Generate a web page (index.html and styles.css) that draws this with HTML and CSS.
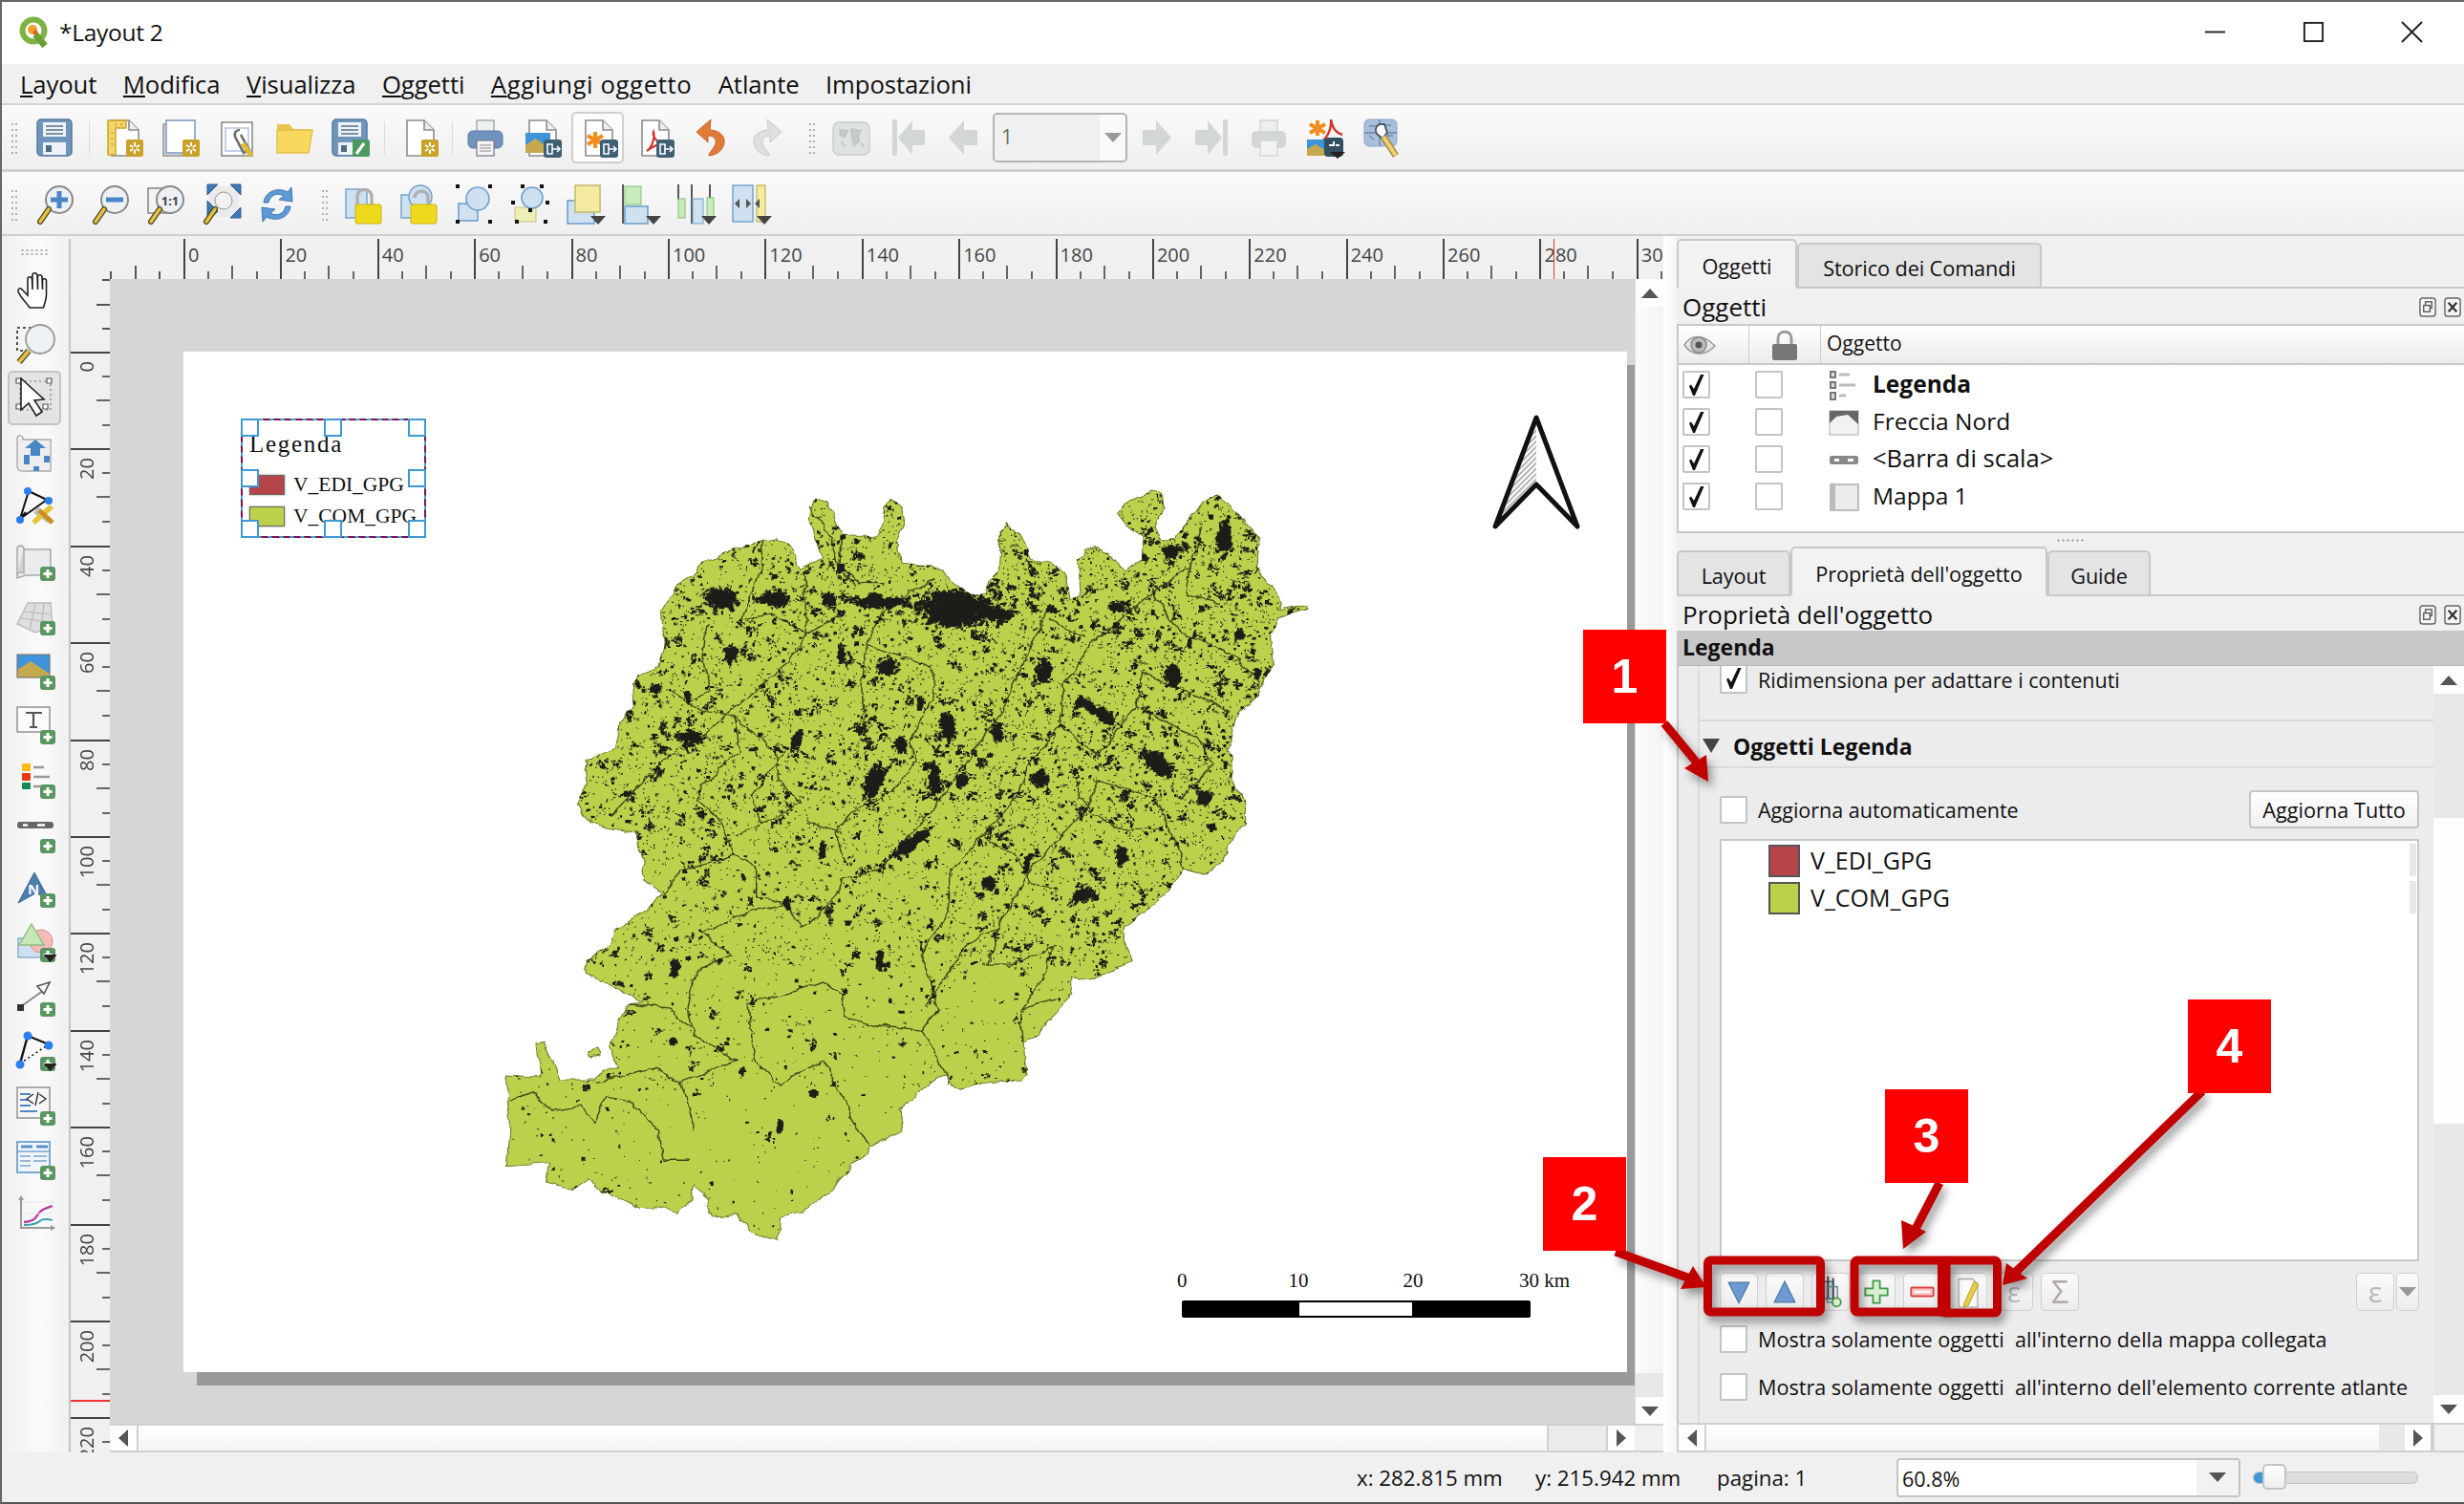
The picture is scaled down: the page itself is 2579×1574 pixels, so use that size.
FILE: index.html
```html
<!DOCTYPE html>
<html lang="it">
<head>
<meta charset="utf-8">
<title>*Layout 2</title>
<link rel="stylesheet" href="styles.css">
</head>
<body>
<svg class="sprite" aria-hidden="true">
<defs>
<pattern id="hatch" width="4" height="4" patternUnits="userSpaceOnUse" patternTransform="rotate(45)"><rect width="4" height="4" fill="#fff"/><rect width="2" height="4" fill="#b4b4b4"/></pattern>
<path id="tick" d="M5 14l2-1.500 3 4.500 7-15h3.500L11 24H9z" fill="#111"/>
<g id="page"><path d="M9 4h18l10 10v27H9z" fill="#fff" stroke="#8c8c8c" stroke-width="1.6"/><path d="M27 4v10h10" fill="#eee" stroke="#8c8c8c" stroke-width="1.6"/></g>
<g id="gear"><rect x="24" y="24" width="18" height="18" rx="2" fill="#c9a227"/><path d="M33 27v12M28 30l10 6M38 30l-10 6" stroke="#fff" stroke-width="2"/><circle cx="33" cy="33" r="2" fill="#c9a227"/></g>
<g id="xport"><rect x="24" y="24" width="19" height="19" rx="3" fill="#3f5f73"/><path d="M28 29h5v10h-5z" fill="none" stroke="#fff" stroke-width="1.6"/><path d="M33 34h7M38 31l3 3-3 3" fill="none" stroke="#fff" stroke-width="1.6"/></g>
<g id="plusb"><rect x="27" y="27" width="16" height="15" rx="3" fill="#5b9660"/><path d="M35 30v9M30.5 34.5h9" stroke="#fff" stroke-width="3"/></g>
<g id="handle"><path d="M15 27L6 40" stroke="#4a4a30" stroke-width="6" stroke-linecap="round"/><path d="M15 27L6 40" stroke="#e8c23a" stroke-width="3.4" stroke-linecap="round"/></g>
<g id="lens"><circle cx="26" cy="17" r="14" fill="#eef1f3" stroke="#8a8a8a" stroke-width="2"/><use href="#handle"/></g>
<g id="floppy"><rect x="4" y="3" width="36" height="38" rx="4" fill="#7095bc" stroke="#557a9f" stroke-width="1.5"/><rect x="10" y="6" width="24" height="15" fill="#eef2f6"/><path d="M13 10h18M13 14h18M13 18h18" stroke="#56718c" stroke-width="1.5"/><rect x="10" y="27" width="24" height="13" fill="#eef2f6"/><rect x="13" y="30" width="6" height="7" fill="#4d6a86"/></g>
<g id="i-newlayout"><use href="#page"/><path d="M5 4h19v8H13v28H5z" fill="#f3d56a" stroke="#c9a227" stroke-width="1.4"/><path d="M8 17h3M8 23h3M8 29h3M13 7v3M19 7v3" stroke="#c9a227" stroke-width="1.2"/><use href="#gear"/></g>
<g id="i-dup"><rect x="4" y="8" width="26" height="33" fill="#dcdcdc" stroke="#8c8c8c" stroke-width="1.4"/><rect x="7" y="4" width="30" height="34" fill="#fff" stroke="#7f9fc4" stroke-width="1.6"/><use href="#gear"/></g>
<g id="i-mgr"><rect x="6" y="6" width="32" height="35" fill="#fff" stroke="#8c8c8c" stroke-width="1.6"/><rect x="10" y="12" width="24" height="24" fill="#fff" stroke="#b6c8e4" stroke-width="1.6"/><path d="M25 14c-4 0-6 3-5 7l9 17 6-3-9-16" fill="none" stroke="#6d6d6d" stroke-width="2.6"/><path d="M28 28l9 13" stroke="#e0bc35" stroke-width="5"/></g>
<g id="i-folder"><path d="M5 8h13l4 5h18v4H5z" fill="#e9c54d"/><path d="M5 14h37l-4 24H5z" fill="#f8d95e" stroke="#e3bf4a" stroke-width="1.4"/></g>
<g id="i-saveas"><use href="#floppy"/><rect x="25" y="24" width="18" height="18" rx="2" fill="#4c9a5f"/><path d="M29 39l8-11" stroke="#fff" stroke-width="3"/></g>
<g id="i-new"><use href="#page"/><use href="#gear"/></g>
<g id="i-print"><rect x="13" y="4" width="18" height="14" fill="#f0f0f0" stroke="#9aa" stroke-width="1.4"/><rect x="4" y="15" width="36" height="18" rx="5" fill="#6f93bc" stroke="#5a7ea5"/><rect x="13" y="25" width="18" height="16" fill="#f6f6f6" stroke="#778" stroke-width="1.2"/><path d="M16 30h12M16 33h12M16 36h12" stroke="#888" stroke-width="1.2"/></g>
<g id="i-img"><use href="#page"/><rect x="5" y="17" width="26" height="21" fill="#3f93d8"/><path d="M5 38V30l10-7 16 10v5z" fill="#c6a94f"/><use href="#xport"/></g>
<g id="i-svg"><use href="#page"/><path d="M19 16v17M11 20l16 9M27 20l-16 9" stroke="#f28c1c" stroke-width="4"/><use href="#xport"/></g>
<g id="i-pdf"><use href="#page"/><path d="M14 36c5-3 9-14 7-20-1 3 2 12 12 13-7-1-14 3-19 7z" fill="none" stroke="#d5352b" stroke-width="2.2"/><use href="#xport"/></g>
<g id="i-undo"><path d="M22 3L7 16l12 11v-7c7 0 9 4 8 8-1 5-7 9-7 13 11-1 17-9 16-17-1-6-8-10-15-10z" fill="#e07a36" stroke="#c8682c"/></g>
<g id="i-redo"><path d="M22 3l15 13-12 11v-7c-7 0-9 4-8 8 1 5 7 9 7 13-11-1-17-9-16-17 1-6 8-10 15-10z" fill="#dde0dd" stroke="#c8cbc8"/></g>
<g id="i-atlas"><rect x="3" y="6" width="38" height="34" rx="6" fill="#dfe2e2" stroke="#c8cccc" stroke-width="1.4"/><path d="M10 14l8 1-3 6-4-1zM22 13l10 2-3 5 1 6-5 4-2-8zM12 26l3 6M33 28l2 4" stroke="#c2c6c6" stroke-width="2" fill="#c8cccc"/></g>
<g id="i-first"><rect x="6" y="3" width="5" height="38" rx="2" fill="#d3d6d6"/><path d="M12 22L27 4v10h13v16H27v10z" fill="#d3d6d6"/></g>
<g id="i-prev"><path d="M6 22L22 4v10h14v16H22v10z" fill="#d3d6d6"/></g>
<g id="i-next"><path d="M38 22L22 4v10H8v16h14v10z" fill="#d3d6d6"/></g>
<g id="i-last"><rect x="33" y="3" width="5" height="38" rx="2" fill="#d3d6d6"/><path d="M32 22L17 4v10H4v16h13v10z" fill="#d3d6d6"/></g>
<g id="i-dprint"><rect x="13" y="4" width="18" height="14" fill="#eee" stroke="#d0d3d3" stroke-width="1.4"/><rect x="4" y="15" width="36" height="18" rx="5" fill="#d3d6d6"/><rect x="13" y="25" width="18" height="16" fill="#f2f2f2" stroke="#d0d3d3" stroke-width="1.2"/></g>
<g id="i-batch"><path d="M14 4v16M6 8l16 9M22 8l-16 9" stroke="#f28c1c" stroke-width="4"/><path d="M28 3c1 10-4 20-11 24m11-24c1 8 5 14 12 16" stroke="#d5352b" stroke-width="2.4" fill="none"/><rect x="3" y="24" width="22" height="17" fill="#3f93d8"/><path d="M3 41v-7l9-5 13 8v4z" fill="#c6a94f"/><rect x="21" y="22" width="20" height="20" rx="4" fill="#324e61"/><path d="M26 30h5v-4M33 30h4" stroke="#fff" stroke-width="2" fill="none"/><path d="M27 37h16l-8 7z" fill="#222"/></g>
<g id="i-asettings"><rect x="4" y="3" width="34" height="28" rx="5" fill="#a8bfdc" stroke="#8ea6c6"/><path d="M9 10h8M22 9h10M9 20l5 4M28 20h6M20 3v28M4 17h34" stroke="#6e86a8" stroke-width="1.4"/><path d="M20 8c-4 2-5 6-3 10l6 5 5-6-3-9z" fill="#fff" stroke="#4d5a6c" stroke-width="2"/><path d="M24 21l13 20" stroke="#a88e3a" stroke-width="7"/><path d="M24 21l13 20" stroke="#edd277" stroke-width="4"/></g>
<g id="i-zin"><use href="#lens"/><path d="M26 8v18M17 17h18" stroke="#4a85c5" stroke-width="5"/></g>
<g id="i-zout"><use href="#lens"/><path d="M17 17h18" stroke="#4a85c5" stroke-width="5"/></g>
<g id="i-z11"><rect x="3" y="5" width="26" height="26" fill="#f2f2f2" stroke="#8a8a8a" stroke-width="1.6"/><use href="#lens"/><text x="26" y="23" class="svgt">1:1</text></g>
<g id="i-zfull"><rect x="9" y="3" width="31" height="32" fill="#e8eaec"/><path d="M7 1h11L7 12zM42 1H31l11 11zM42 36H31l11-11zM7 36h4l7-7L7 18z" fill="#3d77b4" stroke="#2f5f92"/><circle cx="24" cy="18" r="9" fill="#f2f2f2" stroke="#999"/><use href="#handle"/></g>
<g id="i-refresh"><path d="M8 20C9 9 22 3 33 9l4-5 1 15-14-2 5-4c-7-4-14-1-16 7z" fill="#5f98d6" stroke="#3f77b4"/><path d="M36 24C35 35 22 41 11 35l-4 5-1-15 14 2-5 4c7 4 14 1 16-7z" fill="#5f98d6" stroke="#3f77b4"/></g>
<g id="i-lock"><rect x="3" y="6" width="22" height="30" fill="#cfe0f0" stroke="#6ea0cc" stroke-width="1.4"/><path d="M15 25V14c0-10 15-10 15 0v11" fill="none" stroke="#b0b0b0" stroke-width="3.4"/><rect x="13" y="22" width="27" height="20" rx="2" fill="#eed91c" stroke="#c9b414"/></g>
<g id="i-unlock"><rect x="3" y="12" width="16" height="24" fill="#cfe0f0" stroke="#6ea0cc" stroke-width="1.4"/><circle cx="23" cy="14" r="12" fill="#cfe0f0" stroke="#6ea0cc" stroke-width="1.4"/><path d="M17 15c0-9 14-9 14-1v9" fill="none" stroke="#b0b0b0" stroke-width="3.4"/><rect x="13" y="22" width="27" height="20" rx="2" fill="#eed91c" stroke="#c9b414"/></g>
<g id="i-group"><rect x="5" y="21" width="20" height="18" fill="#cfe0f0" stroke="#6ea0cc" stroke-width="1.6"/><circle cx="25" cy="16" r="12" fill="#cfe0f0" stroke="#6ea0cc" stroke-width="1.6"/><path d="M2 1h4v4H2zM36 1h4v4h-4zM2 38h4v4H2zM36 38h4v4h-4z" fill="#111"/></g>
<g id="i-ungroup"><rect x="6" y="25" width="22" height="15" fill="#efeeb4" stroke="#c6c47c"/><circle cx="24" cy="15" r="11" fill="#cfe0f0" stroke="#6ea0cc" stroke-width="1.6"/><path d="M2 18h4v4H2zM12 1h4v4h-4zM32 1h4v4h-4zM38 18h4v4h-4zM36 38h4v4h-4zM6 38h4v4H6zM20 26h4v4h-4z" fill="#111"/></g>
<g id="i-raise"><rect x="3" y="18" width="28" height="24" fill="#cfe0f0" stroke="#6ea0cc" stroke-width="1.6"/><rect x="11" y="2" width="26" height="28" fill="#f3eba0" stroke="#c6bc6a" stroke-width="1.6"/><path d="M27 34h16l-8 9z" fill="#444"/></g>
<g id="i-align"><path d="M3 1v41" stroke="#333" stroke-width="1.6"/><rect x="5" y="3" width="17" height="19" fill="#c6ecbc" stroke="#86c078"/><rect x="5" y="24" width="24" height="18" fill="#cfe0f0" stroke="#6ea0cc" stroke-width="1.6"/><path d="M27 34h16l-8 9z" fill="#444"/></g>
<g id="i-dist"><path d="M3 1v16M17 1v41M36 1v16" stroke="#333" stroke-width="1.6"/><rect x="3" y="16" width="7" height="20" fill="#c6ecbc" stroke="#86c078"/><rect x="18" y="16" width="11" height="26" fill="#cfe0f0" stroke="#6ea0cc"/><rect x="33" y="15" width="7" height="22" fill="#c6ecbc" stroke="#86c078"/><path d="M27 34h16l-8 9z" fill="#444"/></g>
<g id="i-resize"><rect x="2" y="2" width="21" height="38" fill="#cfe0f0" stroke="#6ea0cc" stroke-width="1.4"/><rect x="27" y="2" width="9" height="38" fill="#f3eba0" stroke="#c6bc6a" stroke-width="1.4"/><path d="M4 21l5-5v10zM21 21l-5-5v10zM25 21l5-5v10z" fill="#555"/><path d="M27 34h16l-8 9z" fill="#444"/></g>
<g id="i-hand"><path d="M16 41C13 36 6 30 4 24c-.7-3 2-4 4-2l6 6V11c0-3 4-3 4.500 0L19 22V7c0-3 4.500-3 5 0l.5 15V9c0-3 4.500-3 4.500 0l.5 13v-9c0-3 4-3 4 0v15c0 5-2 8-3 13z" fill="#fff" stroke="#222" stroke-width="1.6"/></g>
<g id="i-zarea"><rect x="3" y="5" width="24" height="24" fill="none" stroke="#222" stroke-width="1.6" stroke-dasharray="3 3"/><circle cx="27" cy="17" r="15" fill="#eef1f3" stroke="#999" stroke-width="1.8"/><path d="M15 29L5 41" stroke="#4a4a30" stroke-width="6.500"/><path d="M15 29L5 41" stroke="#e8c23a" stroke-width="3.600"/></g>
<g id="i-select"><rect x="6" y="4" width="32" height="30" fill="none" stroke="#777" stroke-width="1.2" stroke-dasharray="2 3"/><path d="M2 1h5v5H2zM34 1h5v5h-5zM2 28h5v5H2zM30 28h5v5h-5z" fill="#fff" stroke="#555" stroke-width="1.2"/><path d="M7 1l24 22-10 1 8 12-6 4-8-13-8 7z" fill="#fff" stroke="#222" stroke-width="1.6"/></g>
<g id="i-move"><path d="M3 7c0-4 5-4 6-1v2h29v33H9c-3 0-6-1-6-5z" fill="#eee" stroke="#aaa" stroke-width="1.4"/><path d="M22 8l11 9h-6v8h-10v-8h-6z" fill="#4a85c5"/><path d="M10 24h6v10h-6zM31 25h6v7h-6zM20 36h6v5h-6z" fill="#4a85c5"/></g>
<g id="i-editnodes"><path d="M15 5L6 34l28-20zM6 34l6-7" fill="none" stroke="#111" stroke-width="2"/><circle cx="14" cy="5" r="4" fill="#2b7ef0"/><circle cx="36" cy="15" r="4" fill="#2b7ef0"/><circle cx="6" cy="35" r="4" fill="#2b7ef0"/><path d="M20 28l16 11 4-4-15-14z" fill="#bdbdbd"/><path d="M37 19L18 36l4 4 19-17z" fill="#e8c23a"/><path d="M26 25l14 13" stroke="#c79020" stroke-width="5"/></g>
<g id="mapsheet"><path d="M3 9c0-5 6-5 7-1v1h28v27H12l-9 3z" fill="#ebebeb" stroke="#aaa" stroke-width="1.6"/><path d="M10 8v26c-3-2-6-1-7 1" fill="#d2d2d2" stroke="#aaa" stroke-width="1.4"/></g>
<g id="i-map"><use href="#mapsheet"/><use href="#plusb"/></g>
<g id="i-3d"><path d="M3 30L14 8h24l2 24-18 7z" fill="#dedede" stroke="#bbb" stroke-width="1.4"/><path d="M10 17l28 3M6 24l32 4M22 8l-6 29M31 8l-3 28" stroke="#bbb" stroke-width="1.2"/><use href="#plusb"/></g>
<g id="i-pic"><rect x="3" y="5" width="34" height="24" fill="#3f93d8"/><path d="M3 29v-8l14-9 20 13v4z" fill="#c6a94f"/><rect x="3" y="5" width="34" height="24" fill="none" stroke="#777" stroke-width="1.2"/><use href="#plusb"/></g>
<g id="i-label"><rect x="3" y="3" width="34" height="26" fill="#fbfbfb" stroke="#999" stroke-width="1.6"/><path d="M12 9h17M20 9v15M16 24h8" stroke="#555" stroke-width="2.2"/><use href="#plusb"/></g>
<g id="i-legend"><rect x="8" y="5" width="9" height="8" rx="1" fill="#fdb913"/><rect x="8" y="15" width="9" height="8" rx="1" fill="#e93a0e"/><rect x="8" y="25" width="9" height="7" rx="1" fill="#128a50"/><path d="M20 9h11M20 19h17M20 29h8" stroke="#999" stroke-width="2.4"/><use href="#plusb"/></g>
<g id="i-scale"><rect x="3" y="9" width="38" height="7" rx="3" fill="#666"/><path d="M9 12.500h5M24 12.500h8" stroke="#fff" stroke-width="2.500"/><use href="#plusb"/></g>
<g id="i-north"><path d="M4 37L21 5l14 26-13-4z" fill="#4d7cae" stroke="#3c668f"/><text x="20" y="28" class="svgn">N</text><use href="#plusb"/></g>
<g id="i-shape"><rect x="4" y="17" width="30" height="20" fill="#cfe0f0" stroke="#84abd2" stroke-width="1.4"/><circle cx="28" cy="20" r="12" fill="#f4bcb8" stroke="#d8908a"/><path d="M18 2l13 22H5z" fill="#c4e8b6" stroke="#8dbf7e" stroke-width="1.4"/><use href="#plusb"/><path d="M30 34h15l-7.500 8z" fill="#222"/></g>
<g id="i-arrow"><path d="M6 32L34 12" stroke="#888" stroke-width="2"/><path d="M24 10l13-4-6 12z" fill="#fff" stroke="#555" stroke-width="1.6"/><rect x="3" y="29" width="7" height="7" fill="#333"/><use href="#plusb"/></g>
<g id="i-node"><path d="M14 5L6 34" stroke="#111" stroke-width="2.400"/><path d="M14 5l22 9" stroke="#111" stroke-width="2"/><path d="M6 34l30-20" stroke="#111" stroke-width="1.600" stroke-dasharray="2 3"/><circle cx="14" cy="5" r="4.500" fill="#2b7ef0"/><circle cx="36" cy="15" r="4.500" fill="#2b7ef0"/><circle cx="6" cy="35" r="4.500" fill="#2b7ef0"/><use href="#plusb"/><path d="M30 34h15l-7.500 8z" fill="#222"/></g>
<g id="i-html"><rect x="3" y="2" width="34" height="32" fill="#f6f6f6" stroke="#999" stroke-width="1.6"/><path d="M6 9h11M6 15h8M6 21h11M6 27h18" stroke="#4f86c6" stroke-width="2.200"/><path d="M20 9l-7 5 7 5M26 9l7 5-7 5M25 7l-3 14" fill="none" stroke="#333" stroke-width="1.400"/><use href="#plusb"/></g>
<g id="i-table"><rect x="3" y="2" width="34" height="32" fill="#f0f6fc" stroke="#6ea0cc" stroke-width="1.8"/><path d="M7 7h12M23 7h12" stroke="#5b8fc4" stroke-width="3"/><path d="M3 12h34M6 17h11M6 22h11M6 27h11M20 17h14M20 22h14" stroke="#7aa3cc" stroke-width="1.600"/><use href="#plusb"/></g>
<g id="i-chart"><path d="M7 3v32h35" fill="none" stroke="#999" stroke-width="2"/><path d="M7 1l-3 5h6zM43 35l-5-3v6z" fill="#999"/><path d="M10 29c8-1 11-2 14-7 3-6 8-7 16-10" fill="none" stroke="#b03aa0" stroke-width="2.400"/><path d="M10 32c8 0 14-1 18-5 4-2 8-1 12 0" fill="none" stroke="#3aa0b0" stroke-width="1.800"/><path d="M8 8h34M8 20h32" stroke="#e6e6e6"/></g>
<filter id="wob" x="-4%" y="-4%" width="108%" height="108%" color-interpolation-filters="sRGB"><feTurbulence type="fractalNoise" baseFrequency=".03" numOctaves="3" seed="4" result="n"/><feDisplacementMap in="SourceGraphic" in2="n" scale="16" xChannelSelector="R" yChannelSelector="G"/></filter>
</defs>
</svg>

<div class="app">
  <header class="titlebar">
    <svg class="logo" viewBox="0 0 36 34"><circle cx="17" cy="15" r="11.500" fill="none" stroke="#7cb342" stroke-width="6"/><path d="M19 19l10 12" stroke="#6aa03a" stroke-width="7"/><circle cx="16" cy="14" r="5" fill="#f0a030"/><circle cx="19" cy="17" r="2.500" fill="#e05a20"/></svg>
    <span class="wintitle">*Layout 2</span>
    <div class="winctl">
      <span class="wbtn"><svg class="wi" viewBox="0 0 24 24"><path d="M1 12h22" stroke="#222" stroke-width="2"/></svg></span>
      <span class="wbtn"><svg class="wi" viewBox="0 0 24 24"><rect x="2" y="2" width="20" height="20" fill="none" stroke="#222" stroke-width="2"/></svg></span>
      <span class="wbtn"><svg class="wi" viewBox="0 0 24 24"><path d="M1 1l22 22M23 1L1 23" stroke="#222" stroke-width="2"/></svg></span>
    </div>
  </header>
  <nav class="menubar">
    <span class="mi"><u>L</u>ayout</span><span class="mi"><u>M</u>odifica</span><span class="mi"><u>V</u>isualizza</span><span class="mi"><u>O</u>ggetti</span><span class="mi mi-a"><u>A</u>ggiungi oggetto</span><span class="mi">Atlante</span><span class="mi">Impostazioni</span>
  </nav>
  <div class="toolbar tb1">
    <span class="grip g1a"></span>
    <span class="tool"><svg class="ico" viewBox="0 0 44 44"><use href="#floppy"/></svg></span>
    <span class="sep"></span>
    <span class="tool"><svg class="ico" viewBox="0 0 44 44"><use href="#i-newlayout"/></svg></span>
    <span class="tool"><svg class="ico" viewBox="0 0 44 44"><use href="#i-dup"/></svg></span>
    <span class="tool"><svg class="ico" viewBox="0 0 44 44"><use href="#i-mgr"/></svg></span>
    <span class="tool"><svg class="ico" viewBox="0 0 44 44"><use href="#i-folder"/></svg></span>
    <span class="tool"><svg class="ico" viewBox="0 0 44 44"><use href="#i-saveas"/></svg></span>
    <span class="sep"></span>
    <span class="tool"><svg class="ico" viewBox="0 0 44 44"><use href="#i-new"/></svg></span>
    <span class="sep sep-n"></span>
    <span class="tool"><svg class="ico" viewBox="0 0 44 44"><use href="#i-print"/></svg></span>
    <span class="tool"><svg class="ico" viewBox="0 0 44 44"><use href="#i-img"/></svg></span>
    <span class="tool on"><svg class="ico" viewBox="0 0 44 44"><use href="#i-svg"/></svg></span>
    <span class="tool"><svg class="ico" viewBox="0 0 44 44"><use href="#i-pdf"/></svg></span>
    <span class="tool"><svg class="ico" viewBox="0 0 44 44"><use href="#i-undo"/></svg></span>
    <span class="tool"><svg class="ico" viewBox="0 0 44 44"><use href="#i-redo"/></svg></span>
    <span class="grip g1b"></span>
    <span class="tool"><svg class="ico" viewBox="0 0 44 44"><use href="#i-atlas"/></svg></span>
    <span class="tool"><svg class="ico" viewBox="0 0 44 44"><use href="#i-first"/></svg></span>
    <span class="tool"><svg class="ico" viewBox="0 0 44 44"><use href="#i-prev"/></svg></span>
    <div class="atcombo"><span class="atval">1</span><span class="atdrop"><i class="tri-d tri-grey"></i></span></div>
    <span class="tool"><svg class="ico" viewBox="0 0 44 44"><use href="#i-next"/></svg></span>
    <span class="tool"><svg class="ico" viewBox="0 0 44 44"><use href="#i-last"/></svg></span>
    <span class="tool"><svg class="ico" viewBox="0 0 44 44"><use href="#i-dprint"/></svg></span>
    <span class="tool"><svg class="ico" viewBox="0 0 44 44"><use href="#i-batch"/></svg></span>
    <span class="tool"><svg class="ico" viewBox="0 0 44 44"><use href="#i-asettings"/></svg></span>
  </div>
  <div class="toolbar tb2">
    <span class="grip g2a"></span>
    <span class="tool"><svg class="ico" viewBox="0 0 44 44"><use href="#i-zin"/></svg></span>
    <span class="tool"><svg class="ico" viewBox="0 0 44 44"><use href="#i-zout"/></svg></span>
    <span class="tool"><svg class="ico" viewBox="0 0 44 44"><use href="#i-z11"/></svg></span>
    <span class="tool"><svg class="ico" viewBox="0 0 44 44"><use href="#i-zfull"/></svg></span>
    <span class="tool"><svg class="ico" viewBox="0 0 44 44"><use href="#i-refresh"/></svg></span>
    <span class="grip g2b"></span>
    <span class="tool"><svg class="ico" viewBox="0 0 44 44"><use href="#i-lock"/></svg></span>
    <span class="tool"><svg class="ico" viewBox="0 0 44 44"><use href="#i-unlock"/></svg></span>
    <span class="tool"><svg class="ico" viewBox="0 0 44 44"><use href="#i-group"/></svg></span>
    <span class="tool"><svg class="ico" viewBox="0 0 44 44"><use href="#i-ungroup"/></svg></span>
    <span class="tool"><svg class="ico" viewBox="0 0 44 44"><use href="#i-raise"/></svg></span>
    <span class="tool"><svg class="ico" viewBox="0 0 44 44"><use href="#i-align"/></svg></span>
    <span class="tool"><svg class="ico" viewBox="0 0 44 44"><use href="#i-dist"/></svg></span>
    <span class="tool"><svg class="ico" viewBox="0 0 44 44"><use href="#i-resize"/></svg></span>
  </div>

  <main class="main">
    <div class="vtoolbar">
      <span class="vgrip"></span>
      <span class="vtool"><svg class="ico" viewBox="0 0 44 44"><use href="#i-hand"/></svg></span>
      <span class="vtool"><svg class="ico" viewBox="0 0 44 44"><use href="#i-zarea"/></svg></span>
      <span class="vtool on"><svg class="ico" viewBox="0 0 44 44"><use href="#i-select"/></svg></span>
      <span class="vtool"><svg class="ico" viewBox="0 0 44 44"><use href="#i-move"/></svg></span>
      <span class="vtool"><svg class="ico" viewBox="0 0 44 44"><use href="#i-editnodes"/></svg></span>
      <span class="vtool"><svg class="ico" viewBox="0 0 44 44"><use href="#i-map"/></svg></span>
      <span class="vtool"><svg class="ico" viewBox="0 0 44 44"><use href="#i-3d"/></svg></span>
      <span class="vtool"><svg class="ico" viewBox="0 0 44 44"><use href="#i-pic"/></svg></span>
      <span class="vtool"><svg class="ico" viewBox="0 0 44 44"><use href="#i-label"/></svg></span>
      <span class="vtool"><svg class="ico" viewBox="0 0 44 44"><use href="#i-legend"/></svg></span>
      <span class="vtool"><svg class="ico" viewBox="0 0 44 44"><use href="#i-scale"/></svg></span>
      <span class="vtool"><svg class="ico" viewBox="0 0 44 44"><use href="#i-north"/></svg></span>
      <span class="vtool"><svg class="ico" viewBox="0 0 44 44"><use href="#i-shape"/></svg></span>
      <span class="vtool"><svg class="ico" viewBox="0 0 44 44"><use href="#i-arrow"/></svg></span>
      <span class="vtool"><svg class="ico" viewBox="0 0 44 44"><use href="#i-node"/></svg></span>
      <span class="vtool"><svg class="ico" viewBox="0 0 44 44"><use href="#i-html"/></svg></span>
      <span class="vtool"><svg class="ico" viewBox="0 0 44 44"><use href="#i-table"/></svg></span>
      <span class="vtool"><svg class="ico" viewBox="0 0 44 44"><use href="#i-chart"/></svg></span>
    </div>

    <section class="designer">
      <div class="corner"></div>
      <div class="hruler">
        <span class="hr0"></span>
        <span class="hc">0</span><span class="hc">20</span><span class="hc">40</span><span class="hc">60</span><span class="hc">80</span><span class="hc">100</span><span class="hc">120</span><span class="hc">140</span><span class="hc">160</span><span class="hc">180</span><span class="hc">200</span><span class="hc">220</span><span class="hc">240</span><span class="hc">260</span><span class="hc">280</span><span class="hc">300</span>
        <i class="mark-x"></i>
      </div>
      <div class="vruler">
        <span class="vr0"></span>
        <span class="vc"><b>0</b></span><span class="vc"><b>20</b></span><span class="vc"><b>40</b></span><span class="vc"><b>60</b></span><span class="vc"><b>80</b></span><span class="vc"><b>100</b></span><span class="vc"><b>120</b></span><span class="vc"><b>140</b></span><span class="vc"><b>160</b></span><span class="vc"><b>180</b></span><span class="vc"><b>200</b></span><span class="vc"><b>220</b></span>
        <i class="mark-y"></i>
      </div>
      <div class="view">
        <div class="page">
          <svg id="map" class="map" viewBox="0 0 1568 1568" preserveAspectRatio="none">
            <defs><clipPath id="mapclip"><polygon id="outline" points="335,270 360,225 400,195 405,178 440,165 445,155 520,130 545,125 565,135 590,185 630,165 615,120 605,85 615,50 635,48 650,80 665,120 710,120 735,115 742,60 752,42 775,60 778,90 765,130 770,175 820,180 860,205 900,240 925,235 950,190 955,110 965,95 990,115 1010,165 1060,180 1075,210 1080,250 1100,245 1095,170 1105,145 1130,140 1155,160 1180,190 1210,170 1215,120 1185,100 1168,75 1180,55 1230,25 1250,30 1252,60 1235,100 1245,125 1275,125 1320,50 1345,33 1375,55 1400,95 1425,125 1425,155 1415,185 1450,225 1465,270 1510,260 1512,268 1465,285 1445,320 1450,385 1425,440 1390,480 1365,560 1380,570 1380,625 1400,660 1400,710 1375,735 1360,790 1325,815 1290,800 1250,860 1180,920 1180,950 1188,995 1160,1010 1115,1030 1085,1025 1085,1060 1050,1100 1025,1140 995,1160 1000,1225 990,1235 930,1240 880,1255 850,1225 840,1230 800,1265 770,1295 775,1340 720,1370 660,1440 630,1480 590,1505 550,1520 545,1565 500,1545 470,1510 430,1515 418,1480 395,1450 390,1480 360,1510 330,1495 285,1497 230,1465 200,1440 170,1460 125,1445 130,1405 55,1410 60,1310 50,1225 115,1230 108,1160 120,1155 135,1190 150,1235 215,1235 235,1215 255,1210 240,1165 255,1125 275,1080 300,1075 260,1050 195,1020 200,990 240,960 250,925 300,890 335,855 305,825 290,730 240,720 205,710 183,670 200,625 195,575 220,570 250,555 260,500 285,470 280,440 290,410 330,385 340,340"/></clipPath></defs>
            <g class="map-all">
            <use href="#outline" class="map-land"/>
            <path class="map-land" d="M203 1178l16-6 6 12-18 4z"/>
            <path class="map-bound" d="M520 130l-5 65-35 95 60-10 60 40-35 60-85 80-60 60-75 50-35 45-65 75M595 190l5 130 55-35M830 205l-90 65-30 70-10 90 10 130M1040 270l-40 100-40 100-70 120-70 100-80 110-75 25-25 55-50 45-30-55-90 30-60 35 50 45-60 30-15 80 10 50 75 55-100 45 25 100M465 770l45 30v60l50 10M335 855l35-45 60-25 35-15-25-70-40-40 10-30 70-70-10-70 70 70 10 60 40 50-70 40-50 25M1120 340l-50 80-10 90-60 90-20 60-60 75-60 75v70l-50 100 30 110-30 45 20 35 30 70M495 1075l5 75 5 40 45 55 80-50 40 85 30 70 20 20M495 1075l65-15 70-25 35 25 5 45 65 20 75 10M1290 800l-40-110-10-30-110-40-20 60-50 60-50 60-60 120-60 40-70 120M950 920l-20 80h40l80-35-20 65-40 60 5 70M1370 480l-160-80-10 70-70 100-70-60M1120 340l110-105 70-55 20-80M1230 235l50 85 80 30 70 70M1040 290l70 40M60 1280l40-20 40 40 50-10 20 35 25-55 45 10 50 60 10 60h50M220 1240l105-30 45 30M275 1080l75 10 40 40M710 340l120 50v60l-40 90 10 40-40 60-80 50-30 40 20 60M605 60l40 60 15 70 30 30M665 120l-5 60 35 35 45 0M420 300l-10 80 15 60-40 20M1300 180l-10 60 60 20M1090 620l20 60 60 40 80 0M920 735l60 40 30 60 50 10M560 560l-60 90 20 60M1060 510l70 60M1200 470l110 60 30 60-60 70M990 1090l60-20M600 700l60 30M350 440l60 40 60 10"/>
            <g clip-path="url(#mapclip)"><path id="mapdots" class="map-dots"/></g>
            </g>
          </svg>

          <div class="legend">
            <div class="lg-title">Legenda</div>
            <div class="lg-row"><span class="lg-sw lg-red"></span><span>V_EDI_GPG</span></div>
            <div class="lg-row"><span class="lg-sw lg-green"></span><span>V_COM_GPG</span></div>
            <i class="h h-tl"></i><i class="h h-tc"></i><i class="h h-tr"></i><i class="h h-ml"></i><i class="h h-mr"></i><i class="h h-bl"></i><i class="h h-bc"></i><i class="h h-br"></i>
          </div>

          <svg class="north" viewBox="0 0 100 128"><path d="M47 3L4 117l43-44 43 44z" fill="#fff"/><path d="M47 10L9 109l38-39z" fill="url(#hatch)"/><path d="M47 3L4 117l43-44 43 44z" fill="none" stroke="#111" stroke-width="5" stroke-linejoin="round"/></svg>

          <div class="scalebar">
            <div class="sb-labels"><span class="sl sl1">0</span><span class="sl sl2">10</span><span class="sl sl3">20</span><span class="sl">30 km</span></div>
            <div class="sb-bar"><span class="sb-k"></span><span class="sb-w"></span><span class="sb-k"></span></div>
          </div>
        </div>
      </div>
      <div class="vscroll">
        <span class="sbtn"><i class="tri-u"></i></span>
        <span class="vthumb"></span>
        <span class="sbtn"><i class="tri-d"></i></span>
      </div>
      <div class="hscroll">
        <span class="sbtn"><i class="tri-l"></i></span>
        <span class="hthumb"></span>
        <span class="sbtn sbtn-r"><i class="tri-r"></i></span>
      </div>
      <div class="sbcorner"></div>
    </section>

    <div class="gutter"></div>

    <aside class="side">
      <div class="tabs">
        <span class="tab on t-ogg">Oggetti</span><span class="tab t-sto">Storico dei Comandi</span>
      </div>
      <div class="ptitle"><span>Oggetti</span><span class="pbtns">
        <svg class="pb" viewBox="0 0 20 22"><rect x="1" y="1" width="17" height="20" rx="3" fill="#f4f4f4" stroke="#666" stroke-width="1.500"/><rect x="7" y="5" width="7" height="7" fill="none" stroke="#555" stroke-width="1.400"/><rect x="5" y="9" width="7" height="7" fill="#f4f4f4" stroke="#555" stroke-width="1.400"/></svg>
        <svg class="pb" viewBox="0 0 20 22"><rect x="1" y="1" width="17" height="20" rx="3" fill="#f4f4f4" stroke="#666" stroke-width="1.500"/><path d="M5 6l9 10M14 6l-9 10" stroke="#333" stroke-width="2.400"/></svg>
      </span></div>
      <div class="itemtable">
        <div class="ithead">
          <span class="thc thc1"><svg class="the" viewBox="0 0 36 30"><path d="M2 15C8 5 20 2 34 16 24 27 10 27 2 15z" fill="#e8e8e8" stroke="#999" stroke-width="1.500"/><circle cx="17" cy="15" r="8" fill="#bbb" stroke="#888" stroke-width="1.500"/><circle cx="17" cy="15" r="3.500" fill="#555"/></svg></span>
          <span class="thc thc2"><svg class="thl" viewBox="0 0 30 34"><path d="M8 17V10c0-9 14-9 14 0v7" fill="none" stroke="#9a9a9a" stroke-width="3"/><rect x="2" y="16" width="26" height="17" rx="2" fill="#777"/></svg></span>
          <span class="thc thc3">Oggetto</span>
        </div>
        <div class="itrow"><span class="cb"><svg class="chk" viewBox="0 0 26 26"><use href="#tick"/></svg></span><span class="cb cb-lock"></span>
          <svg class="rowi" viewBox="0 0 32 32"><path d="M1 1h7v8H1zM1 12h7v8H1zM1 23h7v9H1z" fill="#777"/><path d="M3 3h3v4H3zM3 14h3v4H3zM3 25h3v5H3z" fill="#ddd"/><path d="M11 5h11M11 16h17M11 27h7" stroke="#bbb" stroke-width="3"/></svg>
          <b class="itxt">Legenda</b></div>
        <div class="itrow"><span class="cb"><svg class="chk" viewBox="0 0 26 26"><use href="#tick"/></svg></span><span class="cb cb-lock"></span>
          <svg class="rowi" viewBox="0 0 32 32"><rect x="1" y="4" width="30" height="25" fill="#f2f2f2" stroke="#aaa"/><path d="M1 4h30v14L20 8 8 10 1 17z" fill="#666"/></svg>
          <span class="itxt">Freccia Nord</span></div>
        <div class="itrow"><span class="cb"><svg class="chk" viewBox="0 0 26 26"><use href="#tick"/></svg></span><span class="cb cb-lock"></span>
          <svg class="rowi" viewBox="0 0 32 32"><rect x="1" y="12" width="30" height="9" rx="2" fill="#888"/><path d="M6 16.500h5M20 16.500h6" stroke="#fff" stroke-width="3"/></svg>
          <span class="itxt itxt-w">&lt;Barra di scala&gt;</span></div>
        <div class="itrow"><span class="cb"><svg class="chk" viewBox="0 0 26 26"><use href="#tick"/></svg></span><span class="cb cb-lock"></span>
          <svg class="rowi" viewBox="0 0 32 32"><rect x="2" y="3" width="29" height="27" fill="#ececec" stroke="#aaa" stroke-width="1.500"/><path d="M1 3c0-2 6-2 6 0v27H4c-2 0-3-1-3-3z" fill="#bbb"/></svg>
          <span class="itxt">Mappa 1</span></div>
      </div>
      <div class="splitter"><i class="sgrip"></i></div>
      <div class="tabs tabs2">
        <span class="tab t-lay">Layout</span><span class="tab on t-pro">Proprietà dell'oggetto</span><span class="tab t-gui">Guide</span>
      </div>
      <div class="ptitle ptitle2"><span>Proprietà dell'oggetto</span><span class="pbtns">
        <svg class="pb" viewBox="0 0 20 22"><rect x="1" y="1" width="17" height="20" rx="3" fill="#f4f4f4" stroke="#666" stroke-width="1.500"/><rect x="7" y="5" width="7" height="7" fill="none" stroke="#555" stroke-width="1.400"/><rect x="5" y="9" width="7" height="7" fill="#f4f4f4" stroke="#555" stroke-width="1.400"/></svg>
        <svg class="pb" viewBox="0 0 20 22"><rect x="1" y="1" width="17" height="20" rx="3" fill="#f4f4f4" stroke="#666" stroke-width="1.500"/><path d="M5 6l9 10M14 6l-9 10" stroke="#333" stroke-width="2.400"/></svg>
      </span></div>
      <div class="propbar">Legenda</div>
      <div class="propscroll">
        <div class="propcontent">
          <div class="grp1">
            <div class="crow crow-top"><span class="cb cb-cut"><svg class="chk" viewBox="0 0 26 26"><use href="#tick"/></svg></span><span class="ctxt">Ridimensiona per adattare i contenuti</span></div>
          </div>
          <div class="grp2">
            <div class="grphead"><i class="tri-d tri-big"></i><b>Oggetti Legenda</b></div>
            <div class="grpbody">
              <div class="autorow">
                <span class="cb"></span><span class="ctxt">Aggiorna automaticamente</span>
                <span class="pushbtn">Aggiorna Tutto</span>
              </div>
              <div class="listbox">
                <div class="lrow"><span class="lsw lsw-r"></span><span>V_EDI_GPG</span><i class="lbar"></i></div>
                <div class="lrow"><span class="lsw lsw-g"></span><span>V_COM_GPG</span><i class="lbar"></i></div>
              </div>
              <div class="btnrow">
                <span class="ib"><svg class="ibi" viewBox="0 0 40 40"><path d="M8 9h24L20 33z" fill="#6d9bd1" stroke="#4a77a8" stroke-width="1.400"/></svg></span>
                <span class="ib"><svg class="ibi" viewBox="0 0 40 40"><path d="M8 32h24L20 8z" fill="#6d9bd1" stroke="#4a77a8" stroke-width="1.400"/></svg></span>
                <span class="ib"><svg class="ibi" viewBox="0 0 40 40"><rect x="11" y="8" width="12" height="20" fill="#cfe0f0" stroke="#5b7080" stroke-width="1.600"/><path d="M17 2v26M23 4v24" stroke="#444" stroke-width="2"/><rect x="16" y="14" width="12" height="18" fill="none" stroke="#6a8a8a" stroke-width="1.600"/><circle cx="27" cy="32" r="5" fill="#dff0d8" stroke="#4a9a40" stroke-width="2"/></svg></span>
                <span class="ib"><svg class="ibi" viewBox="0 0 40 40"><path d="M16 7h8v9h9v8h-9v9h-8v-9H7v-8h9z" fill="#d8f0d0" stroke="#3f9a48" stroke-width="2"/></svg></span>
                <span class="ib"><svg class="ibi" viewBox="0 0 40 40"><rect x="7" y="15" width="26" height="10" rx="1" fill="#f8c8c8" stroke="#e04040" stroke-width="2"/><path d="M11 20h18" stroke="#fff" stroke-width="2"/></svg></span>
                <span class="ib"><svg class="ibi" viewBox="0 0 40 40"><path d="M9 5h16l6 6v27H9z" fill="#fafafa" stroke="#aaa" stroke-width="1.400"/><path d="M15 34l12-26 5 3-12 25-5 2z" fill="#e8cc44" stroke="#b09a28"/></svg></span>
                <span class="ib ib-d">ε</span>
                <span class="ib ib-d ib-sig">Σ</span>
                <span class="ibr">
                  <span class="ib ib-d ib-e">ε</span><span class="ib ib-drop"><i class="tri-d tri-grey"></i></span>
                </span>
              </div>
              <div class="crow crow-m1"><span class="cb"></span><span class="ctxt ctxt-m">Mostra solamente oggetti&nbsp;&nbsp;all'interno della mappa collegata</span></div>
              <div class="crow crow-m2"><span class="cb"></span><span class="ctxt ctxt-m">Mostra solamente oggetti&nbsp;&nbsp;all'interno dell'elemento corrente atlante</span></div>
            </div>
          </div>
        </div>
        <div class="propsb">
          <span class="sbtn sbtn-p"><i class="tri-u"></i></span>
          <span class="psb-g1"></span>
          <span class="psb-thumb"></span>
          <span class="psb-g2"></span>
          <span class="sbtn sbtn-p"><i class="tri-d"></i></span>
        </div>
      </div>
      <div class="prophscroll">
        <span class="sbtn sbtn-ph"><i class="tri-l"></i></span>
        <span class="ph-thumb"></span>
        <span class="ph-groove"></span>
        <span class="sbtn sbtn-ph"><i class="tri-r"></i></span>
        <span class="ph-corner"></span>
      </div>
    </aside>
  </main>

  <footer class="status">
    <span class="st st-x">x: 282.815 mm</span>
    <span class="st st-y">y: 215.942 mm</span>
    <span class="st st-p">pagina: 1</span>
    <div class="zcombo"><span class="zval">60.8%</span><span class="zdrop"><i class="tri-d"></i></span></div>
    <div class="zslider"><i class="zknob-b"></i><i class="zknob"></i></div>
  </footer>

  <svg class="annot" viewBox="0 0 2579 1574">
    <g class="annot-s">
      <path class="an-line" d="M1742 757L1775 797"/><path class="an-head" d="M1788 818L1763 804 1786 790z"/>
      <path class="an-line" d="M1691 1310L1769 1338"/><path class="an-head" d="M1786 1347L1759 1349 1772 1325z"/>
      <path class="an-line" d="M2030 1238L2003 1290"/><path class="an-head" d="M1992 1307L1990 1277 2016 1289z"/>
      <path class="an-line" d="M2305 1142L2109 1332"/><path class="an-head" d="M2096 1345L2100 1322 2122 1338z"/>
      <rect class="an-rect" x="1787.500" y="1319" width="118" height="54" rx="3"/>
      <rect class="an-rect" x="1941" y="1319" width="96" height="54" rx="3"/>
      <rect class="an-rect" x="2032.500" y="1319" width="58" height="55" rx="3"/>
    </g>
  </svg>
  <div class="badge b1">1</div>
  <div class="badge b2">2</div>
  <div class="badge b3">3</div>
  <div class="badge b4">4</div>
</div>
<script src="map.js"></script>
</body>
</html>
```
FILE: styles.css
```css
*{box-sizing:border-box}
html,body{margin:0;padding:0}
body{width:2579px;height:1574px;overflow:hidden;background:#f0f0f0;font-family:"Open Sans","Noto Sans",sans-serif;color:#111}
.sprite{position:absolute;width:0;height:0}
.svgt{font:700 13px "Open Sans",sans-serif;fill:#444;text-anchor:middle}
.svgn{font:700 15px "Open Sans",sans-serif;fill:#fff;text-anchor:middle}
.app{position:relative;width:2579px;height:1574px;display:flex;flex-direction:column;overflow:hidden;background:#f0f0f0}
.app::before{content:"";position:absolute;left:0;top:0;bottom:0;width:2px;background:#666;z-index:5}
.app::after{content:"";position:absolute;left:0;top:0;right:0;height:2px;background:#666;z-index:5}

/* title */
.titlebar{height:67px;background:#fff;display:flex;align-items:center;flex:none;padding-left:18px}
.logo{width:36px;height:34px;flex:none}
.wintitle{font-size:24.500px;margin-left:8px;letter-spacing:-.3px}
.winctl{margin-left:auto;margin-right:3px;display:flex}
.wbtn{width:103px;height:40px;display:flex;align-items:center;justify-content:center}
.wi{width:23px;height:23px}

/* menu */
.menubar{height:43px;flex:none;background:#f0f0f0;display:flex;align-items:center;padding:2px 0 0 21px;gap:27.500px;font-size:25.700px;border-bottom:2px solid #d4d4d4;letter-spacing:-.1px}
.mi{white-space:nowrap}
.mi-a{letter-spacing:.6px}

/* toolbars */
.toolbar{flex:none;display:flex;align-items:center;background:linear-gradient(#fafafa,#efefef);border-bottom:3px solid #cfcfcf}
.tb1{height:70px}
.tb2{height:67px;border-bottom-width:2px;padding-top:2px}
.tool{flex:none;width:59px;height:100%;display:flex;align-items:center;justify-content:center}
.tb2 .tool{width:58px}
.tool.on{height:54px;width:55px;margin:0 2px;background:#fcfcfc;border:2px solid #cfcfcf;border-radius:5px}
.ico{width:44px;height:44px;display:block;flex:none}
.sep{flex:none;width:14px;height:34px;background:linear-gradient(#dcdcdc,#dcdcdc) center/1px 100% no-repeat}
.sep-n{width:10px}
.grip{flex:none;width:8px;height:34px;background:radial-gradient(circle,#b0b0b0 1px,transparent 1.300px) 0 0/4px 6px}
.g1a{margin:0 8px 0 11px}
.g1b{margin:0 7px 0 14px}
.g2a{margin:0 10px 0 11px}
.g2b{margin:0 8px 0 17px}
.atcombo{flex:none;margin-left:1px;width:141px;height:52px;border:2px solid #b4b4b4;border-radius:5px;display:flex;background:#f9f9f9}
.atval{width:110px;background:#f0f0f0;color:#6b6b6b;font-size:21px;padding:9px 0 0 7px;border-radius:3px 0 0 3px}
.atdrop{flex:1;display:flex;align-items:center;justify-content:center}
.tri-d,.tri-u,.tri-l,.tri-r{display:block;width:0;height:0;border-style:solid;border-color:transparent}
.tri-d{border-width:10px 9px 0;border-top-color:#555}
.tri-u{border-width:0 9px 10px;border-bottom-color:#555}
.tri-l{border-width:9px 10px 9px 0;border-right-color:#555}
.tri-r{border-width:9px 0 9px 10px;border-left-color:#555}
.tri-grey{border-top-color:#999}
.tri-big{border-width:15px 9px 0;border-top-color:#444}

/* main */
.main{flex:none;height:1273px;display:flex}
.vtoolbar{flex:none;width:72px;display:flex;flex-direction:column;align-items:center;background:linear-gradient(90deg,#f0f0f0,#fafafa 60%,#f0f0f0)}
.vgrip{flex:none;width:30px;height:8px;margin:13px 0 6px;background:radial-gradient(circle,#b0b0b0 1px,transparent 1.300px) 0 0/5px 4px}
.vtool{flex:none;width:72px;height:57px;display:flex;align-items:center;justify-content:center}
.vtool.on{width:56px;margin:0 8px;background:#e4e4e4;border:2px solid #c4c4c4;border-radius:5px}
.vtool .ico{margin-left:2px}

/* designer */
.designer{flex:none;width:1669px;margin-top:3px;display:grid;grid-template-columns:43px 1596px 30px;grid-template-rows:42px 1198px 30px}
.corner{grid-column:1;grid-row:1;background:#f0f0f0;border-left:2px solid #c4c4c4}
.hruler{grid-column:2/4;grid-row:1;display:flex;overflow:hidden;position:relative;background:#f0f0f0}
.hr0{flex:none;width:77px;background:linear-gradient(#555,#555) 0 100%/2px 8px no-repeat,linear-gradient(#555,#555) 26px 100%/2px 14px no-repeat,linear-gradient(#555,#555) 51px 100%/2px 8px no-repeat}
.hc{flex:none;width:101.400px;border-left:2px solid #444;padding:4px 0 0 3px;font-size:20px;line-height:26px;color:#444;background:linear-gradient(#666,#666) 23px 100%/2px 8px no-repeat,linear-gradient(#666,#666) 48px 100%/2px 14px no-repeat,linear-gradient(#666,#666) 74px 100%/2px 8px no-repeat}
.mark-x{position:absolute;left:1511px;top:0;bottom:0;width:1px;background:#e33}
.vruler{grid-column:1;grid-row:2/4;display:flex;flex-direction:column;overflow:hidden;position:relative;background:#f0f0f0;border-left:2px solid #c4c4c4}
.vr0{flex:none;height:76px;background:linear-gradient(#555,#555) 100% 0/8px 2px no-repeat,linear-gradient(#555,#555) 100% 26px/14px 2px no-repeat,linear-gradient(#555,#555) 100% 51px/8px 2px no-repeat}
.vc{flex:none;height:101.400px;border-top:2px solid #444;padding:8px 0 0 6px;background:linear-gradient(#666,#666) 100% 23px/8px 2px no-repeat,linear-gradient(#666,#666) 100% 48px/14px 2px no-repeat,linear-gradient(#666,#666) 100% 74px/8px 2px no-repeat}
.vc b{display:block;writing-mode:vertical-rl;transform:rotate(180deg);font-weight:400;font-size:20px;line-height:22px;color:#444;width:22px}
.mark-y{position:absolute;left:0;right:0;top:1173px;height:2px;background:#e33}
.view{grid-column:2;grid-row:2;position:relative;overflow:hidden;background:#d6d6d6}
.page{position:absolute;left:77px;top:76px;width:1511px;height:1068px;background:#fff;z-index:0}
.page::before{content:"";position:absolute;left:14px;top:14px;right:-8px;bottom:-14px;background:#999;z-index:-1}
.page::after{content:"";position:absolute;inset:0;background:#fff;z-index:-1}
.map{position:absolute;left:308px;top:132px;width:900px;height:800px;overflow:visible}
.map-all{filter:url(#wob)}
.map-land{fill:#bdd04c;stroke:#6f7f2f;stroke-width:2}
.map-bound{fill:none;stroke:#3e4a1c;stroke-width:2.600}
.map-dots{fill:#1c1c18}
.legend{position:absolute;left:60px;top:70px;width:194px;height:125px;border:2px solid;border-image:repeating-linear-gradient(45deg,#7b1248 0 5px,#4aa0d8 5px 8px) 2;background:#fff;padding:10px 0 0 7px;font-family:"Liberation Serif",serif;color:#111}
.lg-title{font-size:25px;line-height:30px;letter-spacing:1.700px}
.lg-row{display:flex;align-items:center;height:30px;margin-top:3px;font-size:21.500px;gap:9px;white-space:nowrap}
.lg-title+.lg-row{margin-top:12px}
.lg-sw{flex:none;width:37px;height:21px;border:1.500px solid #6a6a5a;box-shadow:0 0 2px #888}
.lg-red{background:#b5454a}
.lg-green{background:#bdd04a}
.h{position:absolute;width:19px;height:19px;background:#fff;border:2px solid #3f98d3}
.h-tl{left:-2px;top:-2px}.h-tc{left:85px;top:-2px}.h-tr{right:-2px;top:-2px}
.h-ml{left:-2px;top:51px}.h-mr{right:-2px;top:51px}
.h-bl{left:-2px;bottom:-2px}.h-bc{left:85px;bottom:-2px}.h-br{right:-2px;bottom:-2px}
.north{position:absolute;left:1369px;top:66px;width:100px;height:128px}
.scalebar{position:absolute;left:1040px;top:960px;width:420px;font-family:"Liberation Serif",serif;color:#111}
.sb-labels{display:flex;font-size:21px;line-height:24px;white-space:nowrap}
.sl1{width:116.500px}.sl2{width:120px}.sl3{width:121.500px}
.sb-bar{display:flex;margin:9px 0 0 4.500px;width:365px;height:18px;background:#000;border-radius:2px;padding:2px 0}
.sb-k{flex:none;width:123.500px}
.sb-w{flex:none;width:118px;background:#fff}

/* scrollbars */
.sbtn{flex:none;width:30px;height:29px;display:flex;align-items:center;justify-content:center;background:#fdfdfd}
.vscroll{grid-column:3;grid-row:2;display:flex;flex-direction:column;background:#e8e8e8;border-left:1px solid #ddd}
.vthumb{flex:none;height:1116px;background:linear-gradient(90deg,#fbfbfb,#f4f4f4);margin-bottom:25px}
.hscroll{grid-column:2;grid-row:3;display:flex;background:#ebebeb;border-top:2px solid #d0d0d0;border-bottom:2px solid #d0d0d0}
.hscroll .sbtn{height:100%;background:#fdfdfd;border-right:2px solid #d0d0d0}
.hthumb{flex:none;width:1476px;background:linear-gradient(#fff,#f4f4f4);border-right:2px solid #d0d0d0}
.hscroll .sbtn-r{margin-left:auto;border-right:0;border-left:2px solid #d0d0d0}
.sbcorner{grid-column:3;grid-row:3;background:#f0f0f0;border-top:2px solid #d0d0d0;border-bottom:2px solid #d0d0d0}

/* side */
.gutter{flex:none;width:14px;background:linear-gradient(90deg,#fff,#f4f4f4)}
.side{flex:none;width:824px;margin:3px 0 0;display:flex;flex-direction:column}
.tabs{flex:none;height:52px;display:flex;align-items:flex-end;border-bottom:2px solid #c8c8c8}
.tab{flex:none;height:48px;margin-bottom:-2px;background:#e4e4e4;border:2px solid #c8c8c8;border-radius:5px 5px 0 0;display:flex;align-items:center;justify-content:center;font-size:21.700px;letter-spacing:-.1px;white-space:nowrap;padding-top:4px}
.tab.on{height:52px;background:#f2f2f2;border-bottom-color:#f2f2f2}
.t-ogg{width:126px}.t-sto{width:256px}.t-lay{width:119px}.t-pro{width:269px}.t-gui{width:108px}
.tabs2{height:51px}
.ptitle{flex:none;height:37px;display:flex;justify-content:space-between;align-items:center;padding:2px 2px 0 6px;font-size:26px;white-space:nowrap;line-height:35px}
.ptitle2{height:36px}
.pbtns{display:flex;gap:7px;align-items:center}
.pb{width:19px;height:21px;display:block}
.itemtable{flex:none;height:219px;background:#fff;border:2px solid #c8c8c8;border-right:0}
.ithead{height:41px;display:flex;border-bottom:2px solid #c8c8c8;background:linear-gradient(#fff,#ececec)}
.thc{flex:none;display:flex;align-items:center;justify-content:center;border-right:1px solid #ccc}
.thc1{width:74px;justify-content:flex-start;padding-left:4px}
.thc2{width:75px}
.thc3{border:0;padding:0 0 3px 6px;font-size:21px}
.the{width:36px;height:30px}
.thl{width:30px;height:34px}
.itrow{height:39px;display:flex;align-items:center;padding-left:4px}
.ithead+.itrow{margin-top:1px}
.cb{flex:none;width:29px;height:29px;background:#fff;border:2px solid #c4c4c4;border-radius:2px;display:block}
.chk{display:block;width:26px;height:26px;margin:0 auto}
.cb-cut{border-top:0;border-radius:0 0 2px 2px}
.cb-lock{margin-left:47px}
.rowi{flex:none;width:32px;height:32px;margin:0 14px 0 48px}
.itxt{font-size:24.500px;white-space:nowrap;margin-top:-3px}
.itxt-w{font-size:25.500px}
.splitter{flex:none;height:15px;display:flex;align-items:center;justify-content:center}
.sgrip{width:30px;height:3px;background:radial-gradient(circle,#aaa 1px,transparent 1.300px) 0 0/5px 3px}
.propbar{flex:none;height:37px;background:#c8c8c8;font-weight:700;font-size:23px;line-height:35px;padding-left:6px;border-bottom:1px solid #b8b8b8}
.propscroll{flex:none;height:792px;display:flex}
.propcontent{flex:none;width:792px;background:#ececec;border-left:2px solid #c8c8c8;overflow:hidden}
.grp1{height:58px;margin-left:20px;border-left:2px solid #dcdcdc;border-bottom:2px solid #d8d8d8;padding-left:21px}
.crow{display:flex;align-items:center;height:29px}
.ctxt{font-size:21.500px;margin-left:11px;white-space:nowrap}
.ctxt-m{font-size:21.600px}
.grp2{margin-left:20px;border-left:2px solid #dcdcdc;height:734px}
.grphead{height:49px;display:flex;align-items:center;gap:16px;padding:0 0 0 3px;border-bottom:2px solid #dcdcdc}
.grphead b{font-size:23px;padding-top:4px;margin-left:-2px}
.grphead .tri-big{margin-top:4px}
.grpbody{padding:0 15px 0 21px}
.autorow{height:40px;margin-top:23px;display:flex;align-items:center}
.pushbtn{margin-left:auto;width:178px;height:40px;border:2px solid #c4c4c4;border-radius:4px;background:linear-gradient(#fff,#f0f0f0);display:flex;align-items:center;justify-content:center;font-size:21.700px;white-space:nowrap}
.listbox{height:442px;margin-top:11px;background:#fff;border:2px solid #c8c8c8;padding:1px 0 0 49px}
.lrow{height:39px;display:flex;align-items:center;font-size:25px;gap:11px;position:relative}
.lrow span:not(.lsw){margin-top:-2px}
.lsw{flex:none;width:33px;height:34px;border:2px solid #555}
.lsw-r{background:#b5454a}
.lsw-g{background:#bdd04a}
.lbar{position:absolute;right:1px;top:2px;width:7px;height:34px;background:#e8e8e8}
.btnrow{display:flex;margin-top:12px;gap:8px}
.ib{flex:none;width:40px;height:40px;background:linear-gradient(#fbfbfb,#ececec);border:1.500px solid #d0d0d0;border-radius:5px;display:flex;align-items:center;justify-content:center}
.ibi{width:36px;height:36px;display:block}
.ib-d{color:#b8b8b8;font-size:30px;line-height:1}
.ib-sig{font-size:32px;color:#b0a8b0}
.ibr{margin-left:auto;display:flex;gap:2px}
.ib-drop{width:24px}
.crow-m1{margin-top:15px}
.crow-m2{margin-top:21px}
.propsb{flex:none;width:32px;display:flex;flex-direction:column;background:#e8e8e8}
.sbtn-p{width:32px;height:29px}
.psb-g1{flex:none;height:130px}
.psb-thumb{flex:none;height:320px;background:#fdfdfd}
.psb-g2{flex:1}
.prophscroll{flex:none;height:31px;display:flex;background:#ebebeb;border:2px solid #d0d0d0;border-width:2px 0 2px 2px}
.sbtn-ph{width:29px;height:100%;border-right:2px solid #d0d0d0}
.ph-thumb{flex:none;width:704px;background:linear-gradient(#fff,#f4f4f4)}
.ph-groove{flex:none;width:27px;background:#e8e8e8}
.prophscroll .sbtn-ph:last-of-type{border-right:0;width:31px}
.ph-corner{flex:1;background:#f0f0f0;border-left:2px solid #d0d0d0}

/* status */
.status{flex:none;height:54px;display:flex;align-items:center;background:#f0f0f0;border-bottom:2px solid #555;padding-left:1420px}
.st{flex:none;font-size:22.300px;white-space:nowrap;padding-top:1px}
.st-x{width:187px}.st-y{width:190px}.st-p{width:188px}
.zcombo{flex:none;width:360px;height:41px;background:#fff;border:2px solid #c4c4c4;border-radius:4px;display:flex}
.zval{flex:1;font-size:21.500px;line-height:39px;padding-left:4px}
.zdrop{flex:none;width:44px;background:#f2f2f2;display:flex;align-items:center;justify-content:center}
.zslider{flex:none;position:relative;width:173px;height:13px;margin-left:13px;background:#dcdcdc;border:1px solid #c4c4c4;border-radius:6px}
.zknob-b{position:absolute;left:0;top:0;width:12px;height:11px;background:#3f98d3;border-radius:6px 0 0 6px}
.zknob{position:absolute;left:9px;top:-9px;width:25px;height:27px;background:linear-gradient(#fff,#eee);border:2px solid #c4c4c4;border-radius:5px}

/* annotations */
.annot{position:absolute;left:0;top:0;width:2579px;height:1574px;z-index:6;pointer-events:none}
.annot-s{filter:drop-shadow(4px 6px 5px rgba(0,0,0,.4))}
.an-line{stroke:#c00000;stroke-width:9;fill:none}
.an-head{fill:#c00000}
.an-rect{stroke:#c00000;stroke-width:9;fill:none}
.badge{position:absolute;z-index:7;width:87px;height:98px;background:#f00;color:#fff;font:700 50px/98px "Liberation Sans",sans-serif;text-align:center}
.b1{left:1657px;top:659px}
.b2{left:1615px;top:1211px}
.b3{left:1973px;top:1140px}
.b4{left:2290px;top:1046px}
```
FILE: map.js
```js
(function () {
  var seed = 1234567;
  function rnd() {
    seed = (seed + 0x6D2B79F5) | 0;
    var t = Math.imul(seed ^ (seed >>> 15), 1 | seed);
    t = (t + Math.imul(t ^ (t >>> 7), 61 | t)) ^ t;
    return ((t ^ (t >>> 14)) >>> 0) / 4294967296;
  }
  function gauss() { return rnd() + rnd() + rnd() + rnd() - 2; }
  var d = [];
  function box(x, y, w, h) {
    d.push('M' + x.toFixed(1) + ' ' + y.toFixed(1) + 'h' + w.toFixed(1) + 'v' + h.toFixed(1) + 'h' + (-w).toFixed(1) + 'z');
  }
  function density(y, x) {
    var p = y < 700 ? 0.5 : y < 1000 ? 0.36 : y < 1250 ? 0.14 : 0.06;
    if (x > 900 && y < 1000) p *= 1.25;
    return p;
  }
  // scattered houses, dense in the north and east, sparse in the south-west
  var i, x, y;
  for (i = 0; i < 34000; i++) {
    x = 50 + rnd() * 1465;
    y = 25 + rnd() * 1540;
    if (rnd() > density(y, x)) continue;
    var s = rnd();
    if (s < 0.86) box(x, y, 2.2, 2.5);
    else if (s < 0.98) box(x, y, 3.5 + rnd() * 2.5, 4 + rnd() * 2.5);
    else box(x, y, 5 + rnd() * 5, 5 + rnd() * 6);
  }
  // hamlets: little groups of houses
  for (i = 0; i < 1300; i++) {
    x = 50 + rnd() * 1465;
    y = 25 + rnd() * 1540;
    if (rnd() > density(y, x) * 1.6) continue;
    var n = 4 + Math.floor(rnd() * 12);
    for (var j = 0; j < n; j++) {
      box(x + gauss() * 7, y + gauss() * 8, 2.4 + rnd() * 3, 2.6 + rnd() * 3);
    }
  }
  // towns: x, y, radius x, radius y, rotation in degrees
  var towns = [
    [865,265,50,28,0],[935,275,28,12,10],[730,250,38,9,0],[640,245,10,8,0],[535,245,22,10,0],[440,245,20,16,0],[458,360,11,14,0],
    [1030,395,12,16,0],[1265,405,11,17,0],[1130,480,32,7,40],[1240,585,28,12,35],[1025,615,12,11,0],[855,510,10,20,0],[945,520,7,16,0],
    [720,620,11,28,25],[830,620,5,26,0],[790,745,34,7,-40],[385,530,18,9,0],[580,535,6,15,15],[770,545,9,12,0],[660,360,4,16,0],
    [745,385,10,11,0],[1360,120,9,26,0],[1260,150,12,9,0],[1165,262,13,7,0],[1320,655,9,9,0],[1170,775,7,15,0],[1100,855,16,8,-30],
    [930,830,8,8,0],[730,985,5,13,0],[358,1005,5,11,0],[355,1155,4,6,0],[548,1330,4,11,0],[610,1260,6,4,0],[625,760,4,11,0],[805,460,4,10,0],
    [320,430,6,8,0],[380,445,4,9,0],[265,648,4,4,0],[1385,320,6,8,0],[1295,335,4,6,0],[1335,715,6,4,0],[1045,270,6,4,0],[660,185,4,6,0],
    [1210,160,8,6,0],[1095,460,6,8,35],[1420,400,4,6,0],[880,620,6,9,0],[1000,790,3,13,20],[560,870,3,9,0]
  ];
  towns.forEach(function (t) {
    var a = t[4] * Math.PI / 180, c = Math.cos(a), sn = Math.sin(a);
    var count = Math.round(t[2] * t[3] * 1.1) + 24;
    var k, u, v;
    for (k = 0; k < count; k++) {
      u = gauss() * t[2]; v = gauss() * t[3];
      box(t[0] + u * c - v * sn, t[1] + u * sn + v * c, 2.5 + rnd() * 5, 2.5 + rnd() * 5);
    }
    for (k = 0; k < 16; k++) {
      u = (rnd() - 0.5) * 1.4 * t[2]; v = (rnd() - 0.5) * 1.4 * t[3];
      box(t[0] + u * c - v * sn, t[1] + u * sn + v * c, t[2] * 0.35 + 3, t[3] * 0.35 + 3);
    }
  });
  document.getElementById('mapdots').setAttribute('d', d.join(''));
})();
```
